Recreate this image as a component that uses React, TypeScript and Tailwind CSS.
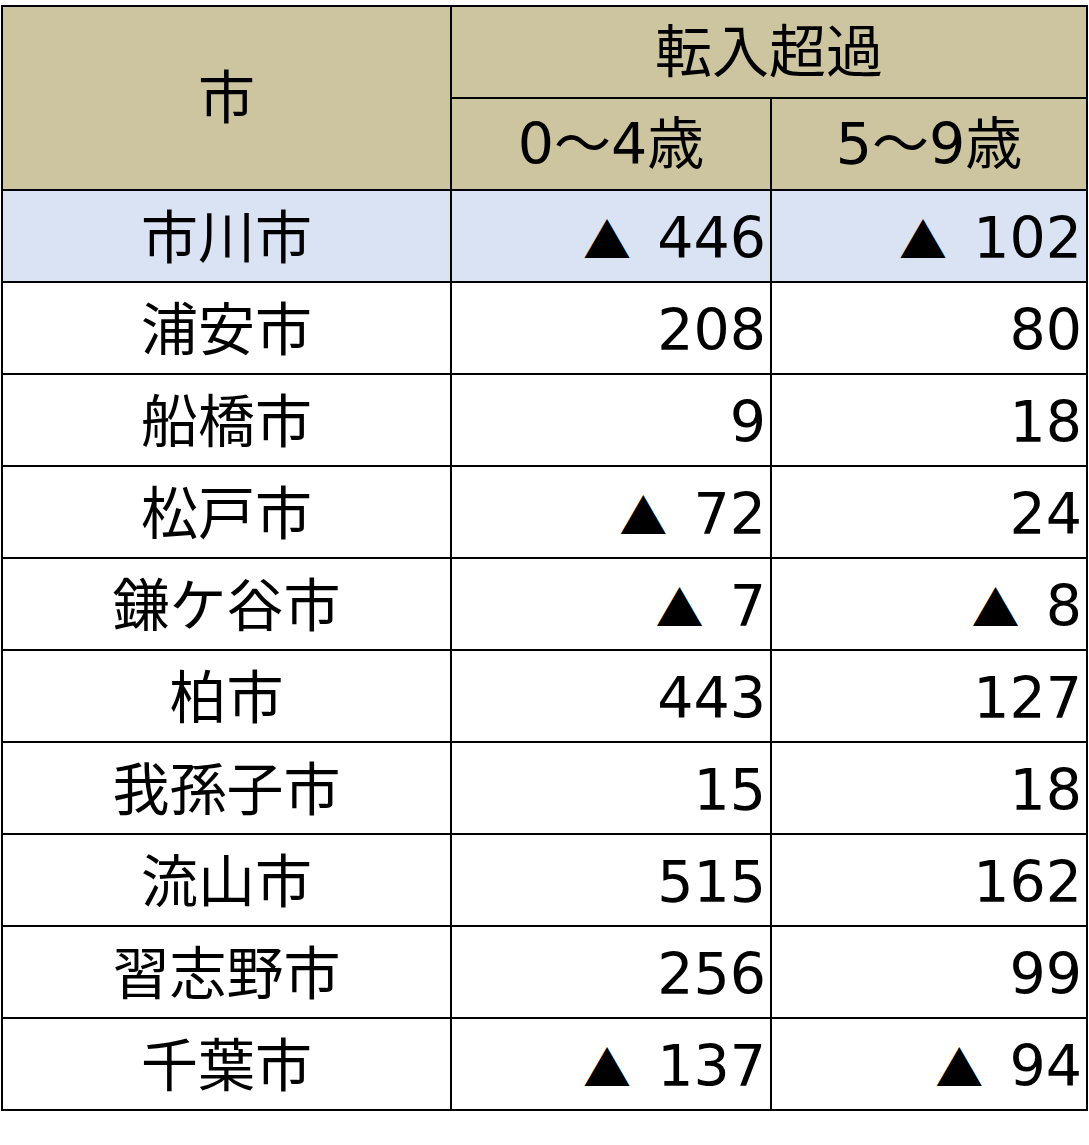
const rows: [string, string, string, boolean?][] = [
  ['市川市', '-446', '-102', true],
  ['浦安市', '208', '80'],
  ['船橋市', '9', '18'],
  ['松戸市', '-72', '24'],
  ['鎌ケ谷市', '-7', '-8'],
  ['柏市', '443', '127'],
  ['我孫子市', '15', '18'],
  ['流山市', '515', '162'],
  ['習志野市', '256', '99'],
  ['千葉市', '-137', '-94'],
];

// negatives are shown with a ▲ in front, as in Japanese reports
function Num({ v }: { v: string }) {
  const neg = v.startsWith('-');
  return (
    <>
      {neg && (
        <span className="text-[48px] mr-[8px]" style={{ fontFamily: '"Noto Sans CJK JP", sans-serif' }}>
          ▲
        </span>
      )}
      {neg && ' '}
      {v.replace('-', '')}
    </>
  );
}

export default function App() {
  return (
    <div
      className="w-[1089px] h-[1145px] bg-white pt-[5px] pl-[1px] text-black"
      style={{ fontFamily: '"DejaVu Sans", "Noto Sans CJK JP", sans-serif' }}
    >
      <table className="border-collapse border-2 border-black text-[57px] leading-none">
        <colgroup>
          <col className="w-[449px]" />
          <col className="w-[320px]" />
          <col className="w-[316px]" />
        </colgroup>
        <thead>
          <tr className="h-[92px] bg-[#ccc5a0]">
            <th rowSpan={2} className="border-2 border-black font-normal text-center">
              市
            </th>
            <th colSpan={2} className="border-2 border-black font-normal text-center">
              転入超過
            </th>
          </tr>
          <tr className="h-[92px] bg-[#ccc5a0]">
            <th className="border-2 border-black font-normal text-center">0〜4歳</th>
            <th className="border-2 border-black font-normal text-center">5〜9歳</th>
          </tr>
        </thead>
        <tbody>
          {rows.map(([city, a, b, hl]) => (
            <tr key={city} className={`h-[92px] ${hl ? 'bg-[#dae3f3]' : 'bg-white'}`}>
              <td className="border-2 border-black text-center pt-[4px]">{city}</td>
              <td className="border-2 border-black text-right pr-[4px] pt-[4px]">
                <Num v={a} />
              </td>
              <td className="border-2 border-black text-right pr-[4px] pt-[4px]">
                <Num v={b} />
              </td>
            </tr>
          ))}
        </tbody>
      </table>
    </div>
  );
}
